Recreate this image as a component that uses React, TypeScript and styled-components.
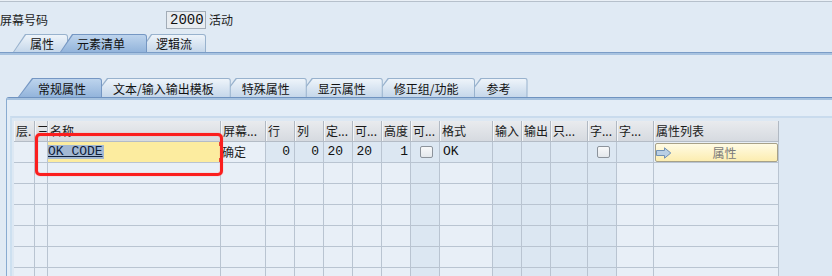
import React from "react";
import styled, { createGlobalStyle } from "styled-components";

const GlobalStyle = createGlobalStyle`
  html, body { margin: 0; padding: 0; }
  body {
    background: #e0eaf4;
    font-family: "Noto Sans CJK SC", "Noto Sans", sans-serif;
    font-size: 12px;
    color: #1d1d1d;
    overflow: hidden;
  }
`;

const Page = styled.div`
  width: 832px;
  height: 276px;
  overflow: hidden;
  display: flex;
  flex-direction: column;
  background: #e0eaf4;
`;

const TopRule = styled.div`
  flex-shrink: 0;
  height: 1px;
  background: #eaf0f6;
  border-bottom: 1px solid #b6c0cb;
`;

const ScreenRow = styled.div`
  flex-shrink: 0;
  height: 32px;
  box-sizing: border-box;
  padding-top: 9px;
  display: flex;
  align-items: flex-start;
`;

const FieldLabel = styled.span`
  width: 166px;
  line-height: 18px;
`;

const ValueBox = styled.span`
  box-sizing: border-box;
  width: 40px;
  height: 18px;
  border: 1px solid #a2acb7;
  background: #e8ecf0;
  font-family: "Liberation Mono", monospace;
  font-size: 14px;
  line-height: 16px;
  padding-left: 3px;
  color: #111;
`;

const StatusText = styled.span`
  margin-left: 3px;
  line-height: 18px;
`;

const TabStrip = styled.div<{ $h: number; $pl: number }>`
  flex-shrink: 0;
  display: flex;
  align-items: stretch;
  height: ${(p) => p.$h}px;
  padding-left: ${(p) => p.$pl}px;
`;

const TabFrame = styled.div<{
  $active?: boolean;
  $z: number;
  $slant: number;
  $overlap: number;
  $first?: boolean;
}>`
  position: relative;
  z-index: ${(p) => (p.$active ? 50 : p.$z)};
  margin-left: ${(p) => (p.$first ? 0 : -p.$overlap)}px;
  padding: 1px 1px 0 1px;
  background: ${(p) => (p.$active ? "#7597c3" : "#98b2cd")};
  clip-path: polygon(${(p) => p.$slant}px 0, 100% 0, 100% 100%, 0 100%);
  border-top-right-radius: 3px;
`;

const TabFace = styled.div<{
  $active?: boolean;
  $slant: number;
  $pl: number;
  $pr: number;
}>`
  height: 100%;
  box-sizing: border-box;
  display: flex;
  align-items: center;
  white-space: nowrap;
  line-height: 14px;
  padding: 1px ${(p) => p.$pr}px 0 ${(p) => p.$pl}px;
  clip-path: polygon(${(p) => p.$slant}px 0, 100% 0, 100% 100%, 0 100%);
  border-top-right-radius: 2px;
  color: #111;
  background: ${(p) =>
    p.$active
      ? "linear-gradient(#bdd4ed, #93b4db)"
      : "linear-gradient(#eef4fa, #c5d7ea)"};
`;

const TabRule = styled.div`
  flex-shrink: 0;
  height: 3px;
  background: linear-gradient(#7b9dc7 0 1px, #a8c3e0 1px 3px);
`;

const StripGap = styled.div`
  flex-shrink: 0;
  height: 23px;
`;

const Panel = styled.div`
  flex: 1;
  min-height: 0;
  margin-left: 6px;
  border-left: 1px solid #89abd0;
  border-top: 1px solid #6f93c0;
  border-top-left-radius: 3px;
  background: #e3edf7;
  display: flex;
  flex-direction: column;
`;

const PanelRule = styled.div`
  flex-shrink: 0;
  height: 2px;
  background: #a6c2df;
`;

const PanelBand = styled.div`
  flex-shrink: 0;
  height: 16px;
`;

const TableFrame = styled.div`
  flex: 1;
  min-height: 0;
  margin-left: 3px;
  border-left: 2px solid #cde0f0;
  border-top: 2px solid #c9dbed;
  padding: 3px 0 0 2px;
  background: #dde8f3;
  overflow: hidden;
`;

const TableWrap = styled.div`
  position: relative;
  width: 765px;
`;

const COLS = "21px 13px 173px 45px 29px 29px 29px 29px 29px 29px 53px 29px 29px 37px 29px 37px 125px";

const Row = styled.div`
  display: grid;
  grid-template-columns: ${COLS};
  height: 21px;
`;

const HeadCell = styled.div`
  box-sizing: border-box;
  height: 21px;
  border-right: 1px solid #b1b9c3;
  border-bottom: 1px solid #b4bcc6;
  box-shadow: inset 1px 0 0 #f3f5f7;
  background: linear-gradient(#e9ebee, #d6dae0);
  padding-left: 2px;
  line-height: 20px;
  white-space: nowrap;
  overflow: hidden;
  color: #1a1a1a;
`;

const Cell = styled.div<{ $dark?: boolean; $right?: number; $center?: boolean; $pl?: number }>`
  box-sizing: border-box;
  height: 21px;
  border-right: 1px solid #b9c4d1;
  border-bottom: 1px solid #b9c4d1;
  background: ${(p) => (p.$dark ? "#dce7f2" : "#e8eff7")};
  display: flex;
  align-items: center;
  justify-content: ${(p) => (p.$center ? "center" : p.$right !== undefined ? "flex-end" : "flex-start")};
  padding-right: ${(p) => p.$right ?? 0}px;
  padding-left: ${(p) => p.$pl ?? 0}px;
  white-space: nowrap;
  overflow: hidden;
  line-height: 20px;
`;

const Mono = styled.span`
  font-family: "Liberation Mono", monospace;
  font-size: 13px;
  color: #111;
`;

const NameField = styled.div`
  position: relative;
  width: 100%;
  height: 100%;
  background: #fcec9f;
  display: flex;
  align-items: center;
`;

const Selected = styled.span`
  font-family: "Liberation Mono", monospace;
  font-size: 13px;
  line-height: 14px;
  color: #10203a;
  background: #a3b8d3;
  text-decoration: underline;
  text-underline-offset: 1px;
  padding: 0 1px 0 0;
`;

const Corner = styled.span<{ $v: "top" | "bottom"; $h: "left" | "right" }>`
  position: absolute;
  width: 4px;
  height: 4px;
  ${(p) => p.$v}: -2px;
  ${(p) => p.$h}: ${(p) => (p.$h === "left" ? -2 : -1)}px;
  border-${(p) => p.$v}: 2px solid #e5442f;
  border-${(p) => p.$h}: 2px solid #e5442f;
`;

const Check = styled.span`
  box-sizing: border-box;
  width: 13px;
  height: 12px;
  border: 1px solid #8c939b;
  border-radius: 2px;
  background: linear-gradient(#f8f9fa, #e4e8ec);
  margin-left: 2px;
`;

const AttrButton = styled.div`
  box-sizing: border-box;
  align-self: flex-start;
  margin: 1px 0 0 1px;
  width: 123px;
  height: 19px;
  border: 1px solid #a7a188;
  border-radius: 2px;
  background: linear-gradient(#fffbe4, #fcedb0);
  display: flex;
  align-items: center;
`;

const ButtonIcon = styled.svg`
  flex-shrink: 0;
`;

const ButtonText = styled.span`
  flex: 1;
  text-align: center;
  color: #7a7a7a;
  line-height: 16px;
`;

const Annotation = styled.div`
  position: absolute;
  left: 21px;
  top: 12px;
  width: 188px;
  height: 43px;
  box-sizing: border-box;
  border: 3px solid #fb1e1e;
  border-radius: 5px;
  box-shadow: 0 0 1px #ff6a6a, inset 0 0 1px #ff6a6a;
  pointer-events: none;
`;

type Col = { h: string; dark: boolean };
const columns: Col[] = [
  { h: "层.", dark: false },
  { h: "三", dark: false },
  { h: "名称", dark: false },
  { h: "屏幕...", dark: false },
  { h: "行", dark: false },
  { h: "列", dark: false },
  { h: "定...", dark: false },
  { h: "可...", dark: false },
  { h: "高度", dark: false },
  { h: "可...", dark: true },
  { h: "格式", dark: false },
  { h: "输入", dark: true },
  { h: "输出", dark: true },
  { h: "只...", dark: true },
  { h: "字...", dark: true },
  { h: "字...", dark: false },
  { h: "属性列表", dark: false },
];

type TabDef = { label: string; active?: boolean };
const outerTabs: TabDef[] = [
  { label: "属性" },
  { label: "元素清单", active: true },
  { label: "逻辑流" },
];
const innerTabs: TabDef[] = [
  { label: "常规属性", active: true },
  { label: "文本/输入输出模板" },
  { label: "特殊属性" },
  { label: "显示属性" },
  { label: "修正组/功能" },
  { label: "参考" },
];

function Tabs({
  tabs,
  h,
  pl,
  slant,
  overlap,
  textPl,
  textPr,
  activePr,
}: {
  tabs: TabDef[];
  h: number;
  pl: number;
  slant: number;
  overlap: number;
  textPl: number;
  textPr: number;
  activePr: number;
}) {
  return (
    <TabStrip $h={h} $pl={pl}>
      {tabs.map((t, i) => (
        <TabFrame
          key={t.label}
          $active={t.active}
          $z={tabs.length - i}
          $slant={slant}
          $overlap={overlap}
          $first={i === 0}
        >
          <TabFace
            $active={t.active}
            $slant={slant}
            $pl={textPl}
            $pr={t.active ? activePr : textPr}
          >
            {t.label}
          </TabFace>
        </TabFrame>
      ))}
    </TabStrip>
  );
}

function ArrowIcon() {
  return (
    <ButtonIcon width="16" height="12" viewBox="0 0 16 12">
      <path
        d="M0.5 3.5 H8.5 V0.8 L14.8 6 L8.5 11.2 V8.5 H0.5 Z"
        fill="#b9cfe4"
        stroke="#7191b4"
        strokeWidth="1"
        strokeLinejoin="round"
      />
    </ButtonIcon>
  );
}

function FirstRow() {
  const nums: Record<number, [string, number]> = {
    4: ["0", 4],
    5: ["0", 4],
    6: ["20", 9],
    7: ["20", 9],
    8: ["1", 2],
  };
  return (
    <Row>
      {columns.map((c, i) => {
        if (i === 2)
          return (
            <Cell key={i}>
              <NameField>
                <Selected>OK_CODE</Selected>
                <Corner $v="top" $h="left" />
                <Corner $v="top" $h="right" />
                <Corner $v="bottom" $h="left" />
                <Corner $v="bottom" $h="right" />
              </NameField>
            </Cell>
          );
        if (i === 3)
          return (
            <Cell key={i} $pl={1}>
              确定
            </Cell>
          );
        if (nums[i])
          return (
            <Cell key={i} $dark $right={nums[i][1]}>
              <Mono>{nums[i][0]}</Mono>
            </Cell>
          );
        if (i === 9 || i === 14)
          return (
            <Cell key={i} $dark $center>
              <Check />
            </Cell>
          );
        if (i === 10)
          return (
            <Cell key={i} $dark $pl={3}>
              <Mono>OK</Mono>
            </Cell>
          );
        if (i === 16)
          return (
            <Cell key={i}>
              <AttrButton>
                <ArrowIcon />
                <ButtonText>属性</ButtonText>
              </AttrButton>
            </Cell>
          );
        return <Cell key={i} $dark={i > 3} />;
      })}
    </Row>
  );
}

export default function App() {
  return (
    <>
      <GlobalStyle />
      <Page>
        <TopRule />
        <ScreenRow>
          <FieldLabel>屏幕号码</FieldLabel>
          <ValueBox>2000</ValueBox>
          <StatusText>活动</StatusText>
        </ScreenRow>
        <Tabs
          tabs={outerTabs}
          h={18}
          pl={13}
          slant={12}
          overlap={8}
          textPl={16}
          textPr={13}
          activePr={21}
        />
        <TabRule />
        <StripGap />
        <Tabs
          tabs={innerTabs}
          h={19}
          pl={18}
          slant={14}
          overlap={9}
          textPl={19}
          textPr={16}
          activePr={15}
        />
        <Panel>
          <PanelRule />
          <PanelBand />
          <TableFrame>
            <TableWrap>
              <Row>
                {columns.map((c, i) => (
                  <HeadCell key={i}>{c.h}</HeadCell>
                ))}
              </Row>
              <FirstRow />
              {[0, 1, 2, 3, 4, 5].map((r) => (
                <Row key={r}>
                  {columns.map((c, i) => (
                    <Cell key={i} $dark={c.dark} />
                  ))}
                </Row>
              ))}
              <Annotation />
            </TableWrap>
          </TableFrame>
        </Panel>
      </Page>
    </>
  );
}
